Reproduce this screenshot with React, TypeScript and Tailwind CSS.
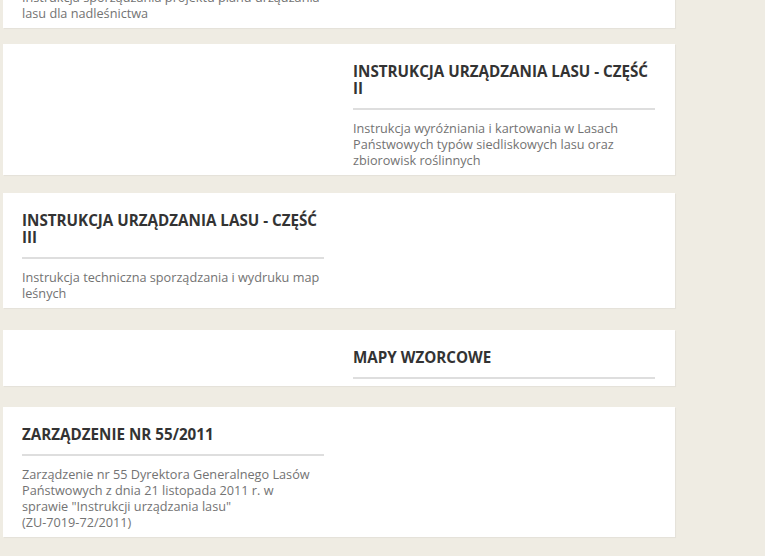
type Card = {
  side: "left" | "right";
  title: string[];
  desc: string[];
  gap: string;
};

const cards: Card[] = [
  {
    side: "left",
    title: [],
    desc: ["Instrukcja sporządzania projektu planu urządzania", "lasu dla nadleśnictwa"],
    gap: "mb-[16px]",
  },
  {
    side: "right",
    title: ["INSTRUKCJA URZĄDZANIA LASU - CZĘŚĆ", "II"],
    desc: [
      "Instrukcja wyróżniania i kartowania w Lasach",
      "Państwowych typów siedliskowych lasu oraz",
      "zbiorowisk roślinnych",
    ],
    gap: "mb-[18px]",
  },
  {
    side: "left",
    title: ["INSTRUKCJA URZĄDZANIA LASU - CZĘŚĆ", "III"],
    desc: ["Instrukcja techniczna sporządzania i wydruku map", "leśnych"],
    gap: "mb-[22px]",
  },
  {
    side: "right",
    title: ["MAPY WZORCOWE"],
    desc: [],
    gap: "mb-[21px]",
  },
  {
    side: "left",
    title: ["ZARZĄDZENIE NR 55/2011"],
    desc: [
      "Zarządzenie nr 55 Dyrektora Generalnego Lasów",
      "Państwowych z dnia 21 listopada 2011 r. w",
      'sprawie "Instrukcji urządzania lasu"',
      "(ZU-7019-72/2011)",
    ],
    gap: "mb-[18px]",
  },
];

const Item = ({ title, desc }: { title: string[]; desc: string[] }) => (
  <div>
    {title.length > 0 && (
      <h3 className="text-[15.2px] leading-[17px] font-bold text-[#333] pb-[11px] border-b-2 border-[#dedede]">
        {title.map((t) => (
          <span key={t} className="block whitespace-nowrap">
            {t}
          </span>
        ))}
      </h3>
    )}
    {desc.length > 0 && (
      <p className={`${title.length ? "mt-[10px]" : ""} text-[12.7px] leading-[16px] text-[#737373]`}>
        {desc.map((d) => (
          <span key={d} className="block whitespace-nowrap">
            {d}
          </span>
        ))}
      </p>
    )}
  </div>
);

export default function App() {
  return (
    <div
      className="min-h-[556px] w-[765px] overflow-hidden bg-[#efece3]"
      style={{ fontFamily: '"Open Sans", "Noto Sans", sans-serif' }}
    >
      <div className="mt-[-11px] pl-[3px] w-[675px]">
        {cards.map((c, i) => (
          <div
            key={i}
            className={`${c.gap} bg-white shadow-[1px_1px_1px_rgba(0,0,0,0.04)] grid grid-cols-2 gap-[29px] pl-[19px] pr-[20px] ${
              c.title.length ? "pt-[19px]" : "pt-0"
            } pb-[7px]`}
          >
            {c.side === "left" ? (
              <>
                <Item title={c.title} desc={c.desc} />
                <div />
              </>
            ) : (
              <>
                <div />
                <Item title={c.title} desc={c.desc} />
              </>
            )}
          </div>
        ))}
      </div>
    </div>
  );
}
